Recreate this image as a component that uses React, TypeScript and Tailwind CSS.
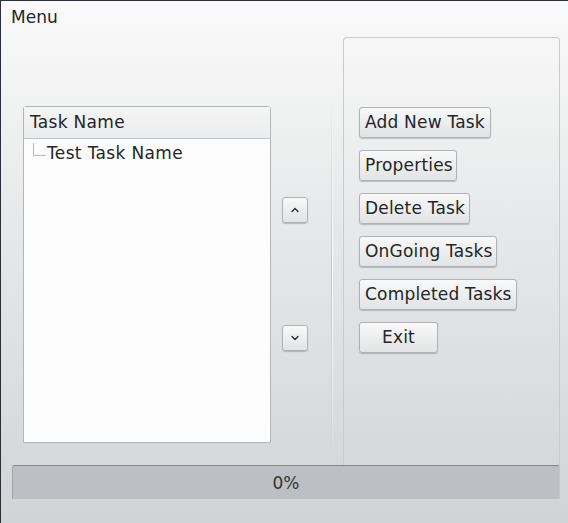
import { ChevronUp, ChevronDown } from 'lucide-react';

const buttons = [
  { label: 'Add New Task', w: 'w-[132px]' },
  { label: 'Properties', w: 'w-[98px]' },
  { label: 'Delete Task', w: 'w-[111px]' },
  { label: 'OnGoing Tasks', w: 'w-[138px]' },
  { label: 'Completed Tasks', w: 'w-[158px]' },
  { label: 'Exit', w: 'w-[79px] justify-center' },
];

const font = { fontFamily: '"DejaVu Sans", "Noto Sans", sans-serif' };

function PushButton({ label, w }: { label: string; w: string }) {
  return (
    <button className={`flex h-[31px] items-center whitespace-nowrap rounded-[3px] border border-[#b0b2b5] bg-gradient-to-b from-[#f9f9f9] to-[#e2e3e4] px-[5px] text-[17px] tracking-[0.2px] text-[#232627] shadow-[0_1px_1px_rgba(0,0,0,0.2)] ${w}`}>
      {label}
    </button>
  );
}

function ArrowButton({ up }: { up?: boolean }) {
  return (
    <button className="flex h-[26px] w-[26px] items-center justify-center rounded-[3px] border border-[#b0b2b5] bg-gradient-to-b from-[#f9f9f9] to-[#e2e3e4] text-[#232627] shadow-[0_1px_1px_rgba(0,0,0,0.2)]">
      {up ? <ChevronUp size={12} strokeWidth={2.5} /> : <ChevronDown size={12} strokeWidth={2.5} />}
    </button>
  );
}

export default function App() {
  return (
    <div
      className="flex h-[523px] w-[568px] flex-col border-l border-t border-[#2b2f38] bg-gradient-to-b from-[#fafafa] via-[#e8e9ea] via-40% to-[#d1d4d7] text-[#232627]"
      style={font}
    >
      <div className="pl-[10px] pt-[6px] text-[17px] leading-[20px]">Menu</div>

      <div className="mt-[10px] flex h-[428px]">
        {/* task tree */}
        <div className="ml-[22px] mt-[69px] flex h-[337px] w-[248px] flex-col rounded-t-[3px] border border-[#b3b6b9] bg-[#fcfcfc]">
          <div className="flex h-[32px] items-center border-b border-[#c3c5c7] bg-gradient-to-b from-[#f5f5f5] to-[#ebeced] pl-[6px] text-[17px] tracking-[0.3px]">
            Task Name
          </div>
          <div className="flex h-[24px] items-end pl-[9px]">
            <div className="mb-[7px] h-[13px] w-[13px] border-b border-l border-[#b5b7b9]" />
            <span className="ml-[1px] text-[17px] leading-[20px] tracking-[0.35px]">Test Task Name</span>
          </div>
        </div>

        {/* move buttons */}
        <div className="ml-[11px] flex flex-col pt-[160px]">
          <ArrowButton up />
          <div className="h-[102px]" />
          <ArrowButton />
        </div>

        {/* separator */}
        <div className="ml-[23px] mt-[58px] mb-[6px] flex">
          <div className="w-px bg-gradient-to-b from-transparent via-[#c3c6c9] to-transparent" />
          <div className="w-px bg-gradient-to-b from-transparent via-white to-transparent" />
        </div>

        {/* group box */}
        <div className="ml-[10px] flex w-[217px] flex-col gap-[12px] rounded-t-[4px] border border-b-0 border-[#c9cbcd] pl-[15px] pt-[69px]">
          {buttons.map((b) => (
            <PushButton key={b.label} label={b.label} w={b.w} />
          ))}
        </div>
      </div>

      <div className="ml-[11px] flex h-[34px] w-[548px] items-center justify-center rounded-t-[2px] border-l border-r border-t border-l-[#a3a6a9] border-r-[#c4c6c8] border-t-[#85888c] bg-[#bcbfc3] pt-[2px] text-[17px] text-[#31363b]">
        0%
      </div>
    </div>
  );
}
